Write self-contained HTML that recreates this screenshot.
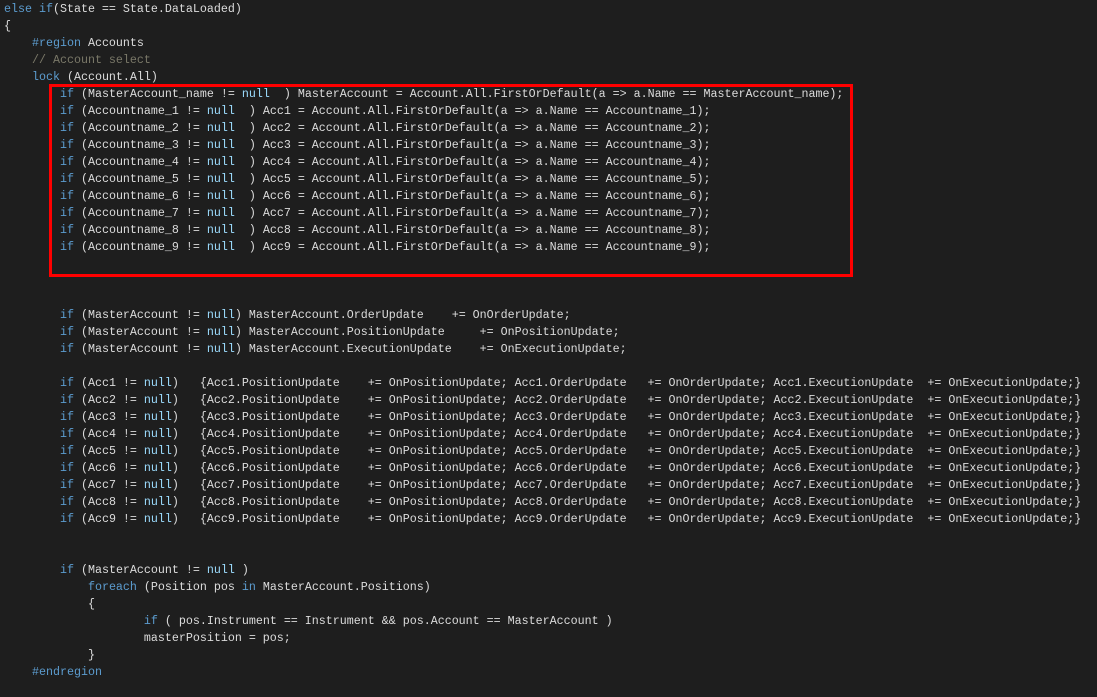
<!DOCTYPE html>
<html><head><meta charset="utf-8"><style>
html,body{margin:0;padding:0;background:#1e1e1e;width:1097px;height:697px;overflow:hidden}
pre{margin:0;position:absolute;left:4px;top:1px;font-family:"Liberation Mono",monospace;font-size:11.67px;line-height:17px;color:#dcdcdc;white-space:pre}
.k{color:#5c9ccf}.n{color:#9cdcfe}.c{color:#7a7868}
.box{position:absolute;left:49px;top:84px;width:798px;height:187px;border:3px solid #ff0000}
</style></head><body>
<div class="box"></div>
<pre><span class="k">else if</span>(State == State.DataLoaded)
{
    <span class="k">#region</span> Accounts
    <span class="c">// Account select</span>
    <span class="k">lock</span> (Account.All)
        <span class="k">if</span> (MasterAccount_name != <span class="n">null</span>  ) MasterAccount = Account.All.FirstOrDefault(a =&gt; a.Name == MasterAccount_name);
        <span class="k">if</span> (Accountname_1 != <span class="n">null</span>  ) Acc1 = Account.All.FirstOrDefault(a =&gt; a.Name == Accountname_1);
        <span class="k">if</span> (Accountname_2 != <span class="n">null</span>  ) Acc2 = Account.All.FirstOrDefault(a =&gt; a.Name == Accountname_2);
        <span class="k">if</span> (Accountname_3 != <span class="n">null</span>  ) Acc3 = Account.All.FirstOrDefault(a =&gt; a.Name == Accountname_3);
        <span class="k">if</span> (Accountname_4 != <span class="n">null</span>  ) Acc4 = Account.All.FirstOrDefault(a =&gt; a.Name == Accountname_4);
        <span class="k">if</span> (Accountname_5 != <span class="n">null</span>  ) Acc5 = Account.All.FirstOrDefault(a =&gt; a.Name == Accountname_5);
        <span class="k">if</span> (Accountname_6 != <span class="n">null</span>  ) Acc6 = Account.All.FirstOrDefault(a =&gt; a.Name == Accountname_6);
        <span class="k">if</span> (Accountname_7 != <span class="n">null</span>  ) Acc7 = Account.All.FirstOrDefault(a =&gt; a.Name == Accountname_7);
        <span class="k">if</span> (Accountname_8 != <span class="n">null</span>  ) Acc8 = Account.All.FirstOrDefault(a =&gt; a.Name == Accountname_8);
        <span class="k">if</span> (Accountname_9 != <span class="n">null</span>  ) Acc9 = Account.All.FirstOrDefault(a =&gt; a.Name == Accountname_9);



        <span class="k">if</span> (MasterAccount != <span class="n">null</span>) MasterAccount.OrderUpdate    += OnOrderUpdate;
        <span class="k">if</span> (MasterAccount != <span class="n">null</span>) MasterAccount.PositionUpdate     += OnPositionUpdate;
        <span class="k">if</span> (MasterAccount != <span class="n">null</span>) MasterAccount.ExecutionUpdate    += OnExecutionUpdate;

        <span class="k">if</span> (Acc1 != <span class="n">null</span>)   {Acc1.PositionUpdate    += OnPositionUpdate; Acc1.OrderUpdate   += OnOrderUpdate; Acc1.ExecutionUpdate  += OnExecutionUpdate;}
        <span class="k">if</span> (Acc2 != <span class="n">null</span>)   {Acc2.PositionUpdate    += OnPositionUpdate; Acc2.OrderUpdate   += OnOrderUpdate; Acc2.ExecutionUpdate  += OnExecutionUpdate;}
        <span class="k">if</span> (Acc3 != <span class="n">null</span>)   {Acc3.PositionUpdate    += OnPositionUpdate; Acc3.OrderUpdate   += OnOrderUpdate; Acc3.ExecutionUpdate  += OnExecutionUpdate;}
        <span class="k">if</span> (Acc4 != <span class="n">null</span>)   {Acc4.PositionUpdate    += OnPositionUpdate; Acc4.OrderUpdate   += OnOrderUpdate; Acc4.ExecutionUpdate  += OnExecutionUpdate;}
        <span class="k">if</span> (Acc5 != <span class="n">null</span>)   {Acc5.PositionUpdate    += OnPositionUpdate; Acc5.OrderUpdate   += OnOrderUpdate; Acc5.ExecutionUpdate  += OnExecutionUpdate;}
        <span class="k">if</span> (Acc6 != <span class="n">null</span>)   {Acc6.PositionUpdate    += OnPositionUpdate; Acc6.OrderUpdate   += OnOrderUpdate; Acc6.ExecutionUpdate  += OnExecutionUpdate;}
        <span class="k">if</span> (Acc7 != <span class="n">null</span>)   {Acc7.PositionUpdate    += OnPositionUpdate; Acc7.OrderUpdate   += OnOrderUpdate; Acc7.ExecutionUpdate  += OnExecutionUpdate;}
        <span class="k">if</span> (Acc8 != <span class="n">null</span>)   {Acc8.PositionUpdate    += OnPositionUpdate; Acc8.OrderUpdate   += OnOrderUpdate; Acc8.ExecutionUpdate  += OnExecutionUpdate;}
        <span class="k">if</span> (Acc9 != <span class="n">null</span>)   {Acc9.PositionUpdate    += OnPositionUpdate; Acc9.OrderUpdate   += OnOrderUpdate; Acc9.ExecutionUpdate  += OnExecutionUpdate;}


        <span class="k">if</span> (MasterAccount != <span class="n">null</span> )
            <span class="k">foreach</span> (Position pos <span class="k">in</span> MasterAccount.Positions)
            {
                    <span class="k">if</span> ( pos.Instrument == Instrument &amp;&amp; pos.Account == MasterAccount )
                    masterPosition = pos;
            }
    <span class="k">#endregion</span>
</pre>
</body></html>
